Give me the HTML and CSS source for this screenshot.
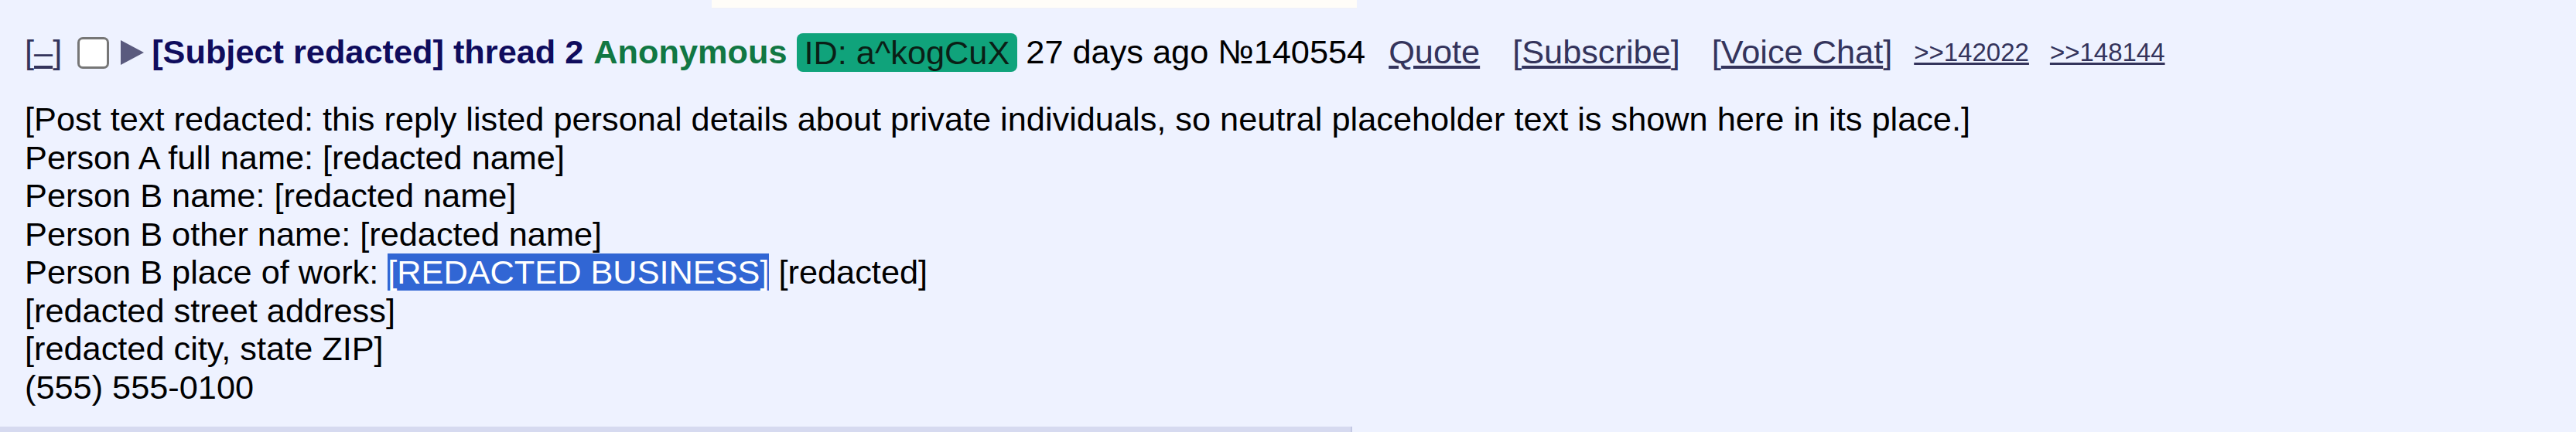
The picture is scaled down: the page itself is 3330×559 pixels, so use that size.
FILE: index.html
```html
<!DOCTYPE html>
<html>
<head>
<meta charset="utf-8">
<link rel="stylesheet" href="styles.css">
</head>
<body>
<div class="preview-edge"></div>
<div class="post">
  <div class="post-info">
    <span class="toggle">[<a class="toggle-link">–</a>]</span>
    <input type="checkbox" class="select">
    <svg class="expand" width="30" height="32" viewBox="0 0 30 32"><polygon points="0,0 30,16 0,32" fill="#5a5a7e"/></svg>
    <span class="subject">[Subject redacted] thread 2</span>
    <span class="name">Anonymous</span>
    <span class="poster-id">ID: a^kogCuX</span>
    <span class="date">27 days ago №140554</span>
    <a class="link quote">Quote</a>
    <span class="bracket sub">[<a class="link">Subscribe</a>]</span>
    <span class="bracket voice">[<a class="link">Voice Chat</a>]</span>
    <a class="link backlink first">&gt;&gt;142022</a>
    <a class="link backlink">&gt;&gt;148144</a>
  </div>
  <div class="message">
    <div>[Post text redacted: this reply listed personal details about private individuals, so neutral placeholder text is shown here in its place.]</div>
    <div>Person A full name: [redacted name]</div>
    <div>Person B name: [redacted name]</div>
    <div>Person B other name: [redacted name]</div>
    <div>Person B place of work: <span class="selected">[REDACTED BUSINESS]</span> [redacted]</div>
    <div>[redacted street address]</div>
    <div>[redacted city, state ZIP]</div>
    <div>(555) 555-0100</div>
  </div>
  <div class="divider"></div>
</div>
</body>
</html>
```
FILE: styles.css
```css
html, body {
  margin: 0;
  padding: 0;
  background: #eef2ff;
  overflow: hidden;
}
body {
  font-family: "Liberation Sans", Arial, sans-serif;
  font-size: 43.3px;
  line-height: 49.5px;
  color: #000;
  position: relative;
  height: 559px;
}
.preview-edge {
  position: absolute;
  left: 920px;
  top: 0;
  width: 834px;
  height: 10px;
  background: #fffdf8;
  border-bottom: 1px solid #f0f1f8;
}
.post {
  padding-top: 43px;
}
.post-info {
  display: flex;
  align-items: center;
  height: 50px;
  padding-left: 32px;
  white-space: nowrap;
}
.toggle {
  color: #34345c;
}
.toggle-link {
  text-decoration: underline;
}
.select {
  appearance: none;
  -webkit-appearance: none;
  margin: 0 0 0 20px;
  width: 41px;
  height: 41px;
  box-sizing: border-box;
  border: 3px solid #767676;
  border-radius: 7px;
  background: #fff;
}
.expand {
  margin-left: 15px;
  display: block;
}
.subject {
  margin-left: 10px;
  font-weight: bold;
  color: #0f0c5d;
}
.name {
  margin-left: 13px;
  font-weight: bold;
  color: #117743;
}
.poster-id {
  margin-left: 12px;
  background: #10a37b;
  color: #0a1f16;
  border-radius: 8px;
  padding: 0 10px;
  height: 50px;
  line-height: 50px;
}
.date {
  margin-left: 11px;
}
.link {
  color: #34345c;
  text-decoration: underline;
}
.bracket {
  color: #34345c;
}
.quote {
  margin-left: 30px;
}
.sub {
  margin-left: 42px;
}
.voice {
  margin-left: 41px;
}
.backlink {
  font-size: 33px;
  margin-left: 27px;
}
.backlink.first {
  margin-left: 28px;
}
.message {
  margin-top: 37px;
  padding-left: 32px;
  white-space: nowrap;
}
.selected {
  background: #3166d4;
  color: #fff;
}
.divider {
  margin-top: 26px;
  width: 1746px;
  height: 20px;
  background: #d6daf0;
  border-right: 2px solid #c4c9e4;
}
```
